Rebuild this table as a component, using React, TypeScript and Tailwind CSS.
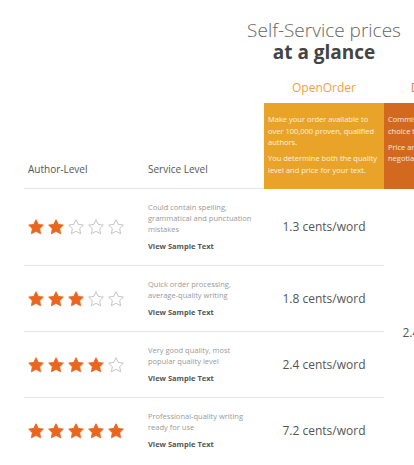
import React from "react";

type Row = { stars: number; lines: string[]; price: string };

const rows: Row[] = [
  { stars: 2, lines: ["Could contain spelling,", "grammatical and punctuation", "mistakes"], price: "1.3 cents/word" },
  { stars: 3, lines: ["Quick order processing,", "average-quality writing"], price: "1.8 cents/word" },
  { stars: 4, lines: ["Very good quality, most", "popular quality level"], price: "2.4 cents/word" },
  { stars: 5, lines: ["Professional-quality writing", "ready for use"], price: "7.2 cents/word" },
];

function Star({ filled }: { filled: boolean }) {
  return (
    <svg width="16" height="16" viewBox="1.5 1.5 21 21">
      <polygon
        points="12,2.5 15,8.6 21.6,9.5 16.8,14.2 18,20.8 12,17.7 6,20.8 7.2,14.2 2.4,9.5 9,8.6"
        fill={filled ? "#ea661e" : "none"}
        stroke={filled ? "#ea661e" : "#a9a9a9"}
        strokeWidth={filled ? 1.2 : 0.9}
        strokeLinejoin="round"
      />
    </svg>
  );
}

export default function App() {
  return (
    <div className="h-[465px] w-full overflow-hidden bg-white font-['Open_Sans',sans-serif] text-[#555]">
      <div className="ml-6 w-[480px]">
        {/* Heading */}
        <div className="grid grid-cols-[120px_120px_120px_120px] pt-[19px]">
          <div className="col-start-3 flex flex-col items-center whitespace-nowrap text-[19px] leading-[22px]">
            <span className="font-light text-[#666]">Self-Service prices</span>
            <span className="font-bold text-[#444]">at a glance</span>
          </div>
        </div>

        {/* Price table */}
        <div className="mt-[17px] grid grid-cols-[120px_120px_120px_120px]">
          {/* labels */}
          <div />
          <div />
          <div className="pb-[7px] text-center text-[12px] leading-4 text-[#eba43a]">OpenOrder</div>
          <div className="pb-[7px] text-center text-[12px] leading-4 text-[#df8636]">DirectOrder</div>

          {/* header row */}
          <div className="flex items-end border-b border-[#e6e6e6] px-1 pb-3 text-[10px] leading-[14px]">Author-Level</div>
          <div className="flex items-end border-b border-[#e6e6e6] px-1 pb-3 text-[10px] leading-[14px]">Service Level</div>
          <div className="h-[86px] bg-[#e9a328] px-1 pt-[11px] text-[7.5px] leading-[11.5px] text-white/85">
            <p>Make your order available to<br />over 100,000 proven, qualified<br />authors.</p>
            <p className="mt-[4.5px]">You determine both the quality<br />level and price for your text.</p>
          </div>
          <div className="h-[86px] bg-[#d2691e] px-1 pt-[11px] text-[7.5px] leading-[11.5px] text-white/85">
            <p>Commission an author of your<br />choice to write your text.</p>
            <p className="mt-[4.5px]">Price and deadline are<br />negotiated directly.</p>
          </div>

          {/* shared DirectOrder price */}
          <div className="col-start-4 row-span-4 row-start-3 flex items-center justify-center pt-[14px] text-[12px]">
            2.4 cents/word
          </div>

          {rows.map((r, i) => {
            const line = i < rows.length - 1 ? "border-b border-[#e6e6e6]" : "";
            return (
              <React.Fragment key={i}>
                <div className={`flex items-center gap-1 px-1 ${line}`}>
                  {[0, 1, 2, 3, 4].map((s) => (
                    <Star key={s} filled={s < r.stars} />
                  ))}
                </div>
                <div className={`px-1 py-[13px] ${line}`}>
                  <p className="text-[7.5px] leading-[11px] text-[#999]">
                    {r.lines.map((l, j) => (
                      <React.Fragment key={j}>
                        {j > 0 && <br />}
                        {l}
                      </React.Fragment>
                    ))}
                  </p>
                  <p className="mt-[6px] text-[7.5px] font-bold leading-[11px] text-[#555]">View Sample Text</p>
                </div>
                <div className={`flex items-center justify-center text-[12px] ${line}`}>{r.price}</div>
              </React.Fragment>
            );
          })}
        </div>
      </div>
    </div>
  );
}
